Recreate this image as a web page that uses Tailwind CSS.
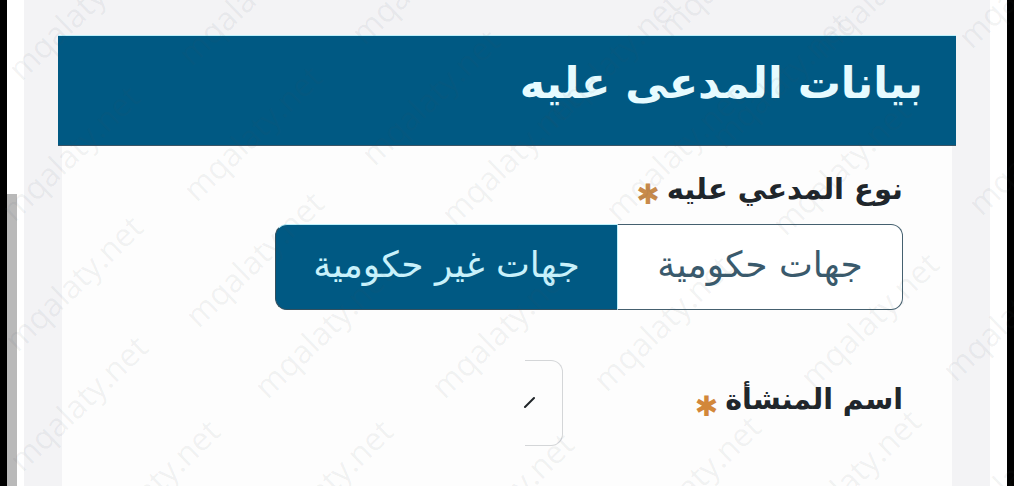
<!DOCTYPE html>
<html lang="ar" dir="rtl">
<head>
    <meta charset="UTF-8">
    <meta name="viewport" content="width=device-width, initial-scale=1.0">
    <title>بيانات المدعى عليه</title>
    <script src="https://cdn.jsdelivr.net/npm/@tailwindcss/browser@4"></script>
</head>
<body class="relative h-[486px] w-[1014px] overflow-hidden bg-white font-['DejaVu_Sans',sans-serif]">
    <div dir="ltr" class="flex h-full">
        <!-- left edge + scrollbar -->
        <div class="w-[7px] bg-black"></div>
        <div class="w-[17px] bg-white pt-[194px]">
            <div class="h-full w-[10px] bg-[#b9b9b9]"></div>
        </div>

        <main dir="rtl" class="flex w-[966px] flex-col bg-[#f3f3f5] pt-[35px] pl-[34px] pr-[34px]">
            <!-- Header -->
            <div class="flex h-[111px] items-center border-t border-b border-[#bdf0fb] border-b-[#3b5566] bg-[#005983] pr-[33px] pb-[14px]">
                <h1 class="text-[43px] font-bold leading-none text-[#e6fbff]">بيانات المدعى عليه</h1>
            </div>

            <!-- Form -->
            <div class="mx-[4px] flex-1 bg-[#fdfdfd] pt-[18px] pr-[49px]">
                <div class="mb-[10px] flex h-[50px] items-center gap-[7px] text-[29px] leading-none font-bold text-[#20262b]">
                    <span>نوع المدعي عليه</span>
                    <span class="mt-[12px] text-[28px] text-[#c88a4a]">✱</span>
                </div>

                <div class="flex h-[86px] w-[628px] text-[36px]">
                    <div class="flex w-[286px] items-center justify-center rounded-r-[12px] border border-[#45606f] border-l-[#bdf0fb] bg-white pb-[5px] text-[#3a5a6c]">جهات حكومية</div>
                    <div class="flex flex-1 items-center justify-center rounded-l-[12px] border-t border-b border-l border-[#33505f] border-t-[#bdf0fb] bg-[#005983] pb-[5px] text-[#c8f1fb]">جهات غير حكومية</div>
                </div>

                <div class="mt-[50px] flex items-center">
                    <div class="flex w-[340px] items-center gap-[7px] pb-[6px] text-[28.5px] leading-none font-bold text-[#20262b]">
                        <span>اسم المنشأة</span>
                        <span class="mt-[14px] text-[28px] text-[#d2873a]">✱</span>
                    </div>
                    <div class="flex h-[86px] w-[38px] items-center justify-end rounded-r-[12px] border-y border-r border-[#d4d6d8]">
                        <svg width="12" height="14" viewBox="0 0 12 14" class="ml-[-2px]">
                            <path d="M11 2 L2 11" stroke="#1f2428" stroke-width="2" stroke-linecap="round" fill="none"/>
                        </svg>
                    </div>
                </div>
            </div>
        </main>

        <div class="w-[17px] bg-white"></div>
        <div class="flex-1 bg-black"></div>
    </div>

    <!-- Watermark -->
    <div id="wm" dir="ltr" class="pointer-events-none absolute inset-0 overflow-hidden"></div>

    <script>
        // watermark centres read off the picture
        const marks = [
            [77,12],[70,153],[73,283],[78,403],[150,487],
            [247,-3],[252,133],[254,259],[323,330],[323,487],
            [420,-24],[430,97],[510,157],[500,330],[504,500],
            [610,60],[674,153],[662,323],[691,483],
            [727,-30],[780,80],[841,167],[869,320],[851,477],
            [880,-10],[1027,-20],[1037,147],[1011,313],[1014,473]
        ];
        const wm = document.getElementById('wm');
        marks.forEach(([x, y]) => {
            const s = document.createElement('span');
            s.className = "absolute -translate-x-1/2 -translate-y-1/2 -rotate-[44deg] whitespace-nowrap font-['Open_Sans',sans-serif] text-[32px] font-medium text-[#40505c]/7";
            s.textContent = 'mqalaty.net';
            s.style.left = x + 'px';
            s.style.top = y + 'px';
            wm.appendChild(s);
        });
    </script>
</body>
</html>
